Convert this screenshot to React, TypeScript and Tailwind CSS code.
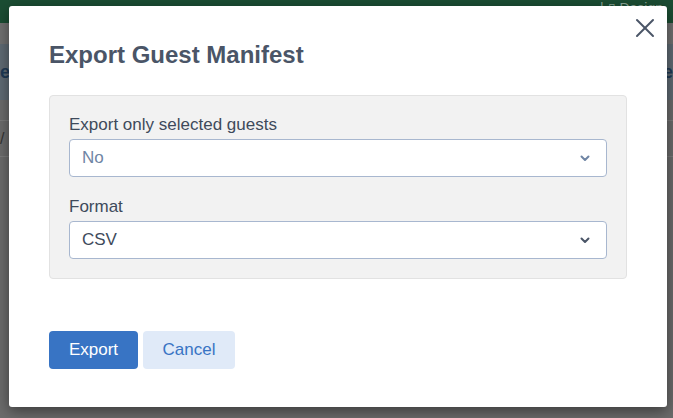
import { X } from "lucide-react";

function Chevron({ color }: { color: string }) {
  return (
    <svg width="10" height="7" viewBox="0 0 10 7" className="shrink-0">
      <path d="M1.5 1.5 L5 5 L8.5 1.5" fill="none" stroke={color} strokeWidth="2" strokeLinecap="round" strokeLinejoin="round" />
    </svg>
  );
}

type FieldProps = {
  label: string;
  value: string;
  muted?: boolean;
};

function SelectField({ label, value, muted }: FieldProps) {
  return (
    <div className="flex flex-col">
      <label className="text-[17px] leading-[18px] text-[#3e4a5b] mb-[5px]">{label}</label>
      <div className="flex items-center justify-between h-[38px] bg-white border border-[#a8b7cf] rounded-[4px] pl-[12px] pr-[16px]">
        <span className={`text-[17px] ${muted ? "text-[#6f85a4]" : "text-[#3e4a5b]"}`}>{value}</span>
        <Chevron color={muted ? "#6f85a4" : "#4a5567"} />
      </div>
    </div>
  );
}

function Background() {
  return (
    <div className="absolute inset-0 flex flex-col bg-[#6b6b6b]">
      <div className="h-[23px] bg-[#1b4d33] flex justify-end pr-[10px] text-[#8aa596] text-[14px] leading-[16px]">
        <span>| ▯ Design</span>
      </div>
      <div className="h-[21px] bg-[#707070]" />
      <div className="h-[56px] bg-[#5f6a73] flex items-center justify-between text-[#1f3a55] text-[18px] font-bold">
        <span>e</span>
        <span>e</span>
      </div>
      <div className="h-px bg-[#7a7a7a] mt-[20px]" />
      <div className="h-[35px] text-[#333] text-[16px] flex items-center">/</div>
      <div className="h-px bg-[#7a7a7a]" />
      <div className="flex-1" />
    </div>
  );
}

export default function App() {
  return (
    <div className="relative w-[673px] h-[418px] overflow-hidden" style={{ fontFamily: "Helvetica, 'Liberation Sans', Arial, sans-serif" }}>
      <Background />
      <div className="absolute left-[9px] top-[6px] w-[658px] h-[401px] bg-white rounded-[3px] shadow-[0_4px_14px_rgba(0,0,0,0.45)] px-[40px] pt-[35px]">
        <button className="absolute right-[6px] top-[6px] text-[#4a5567]">
          <X size={32} strokeWidth={1.5} />
        </button>
        <h2 className="text-[24px] leading-[28px] font-bold text-[#4a5567]">Export Guest Manifest</h2>
        <div className="mt-[26px] bg-[#f2f2f2] border border-[#e2e2e2] rounded-[4px] px-[19px] pt-[20px] pb-[19px] flex flex-col gap-[21px]">
          <SelectField label="Export only selected guests" value="No" muted />
          <SelectField label="Format" value="CSV" />
        </div>
        <div className="mt-[52px] flex gap-[5px]">
          <button className="h-[38px] w-[89px] rounded-[4px] bg-[#3874c4] text-white text-[17px]">Export</button>
          <button className="h-[38px] w-[92px] rounded-[4px] bg-[#e0eaf8] text-[#3874c4] text-[17px]">Cancel</button>
        </div>
      </div>
    </div>
  );
}
